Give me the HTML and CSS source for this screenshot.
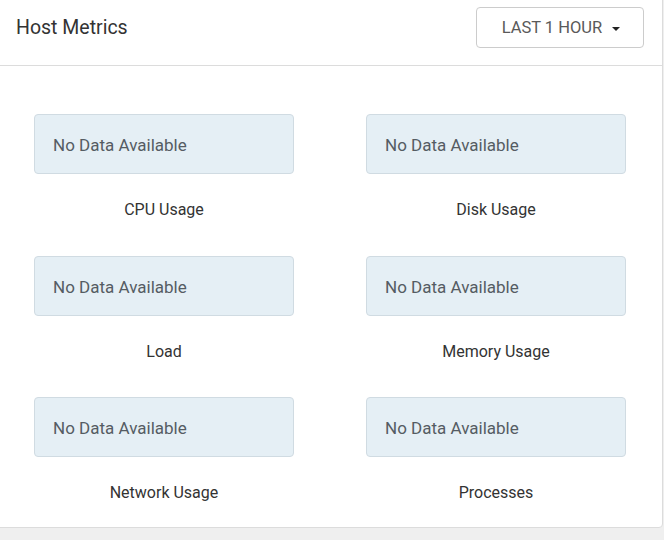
FILE: index.html
```html
<!DOCTYPE html>
<html lang="en">
<head>
    <meta charset="UTF-8">
    <title>Host Metrics</title>
    <link rel="stylesheet" href="styles.css">
</head>
<body>
    <div class="panel">
        <div class="panel-heading">
            <h3 class="panel-title">Host Metrics</h3>
            <button class="range-btn">Last 1 Hour <span class="caret"></span></button>
        </div>

        <div class="panel-body">
            <div class="metric">
                <div class="no-data">No Data Available</div>
                <div class="metric-label">CPU Usage</div>
            </div>
            <div class="metric">
                <div class="no-data">No Data Available</div>
                <div class="metric-label">Disk Usage</div>
            </div>
            <div class="metric">
                <div class="no-data">No Data Available</div>
                <div class="metric-label">Load</div>
            </div>
            <div class="metric">
                <div class="no-data">No Data Available</div>
                <div class="metric-label">Memory Usage</div>
            </div>
            <div class="metric">
                <div class="no-data">No Data Available</div>
                <div class="metric-label">Network Usage</div>
            </div>
            <div class="metric">
                <div class="no-data">No Data Available</div>
                <div class="metric-label">Processes</div>
            </div>
        </div>
    </div>
</body>
</html>
```

FILE: styles.css
```css
body {
    margin: 0;
    background: #efefef;
    font-family: 'Roboto', 'Liberation Sans', sans-serif;
    color: #333;
}

.panel {
    width: 664px;
    box-sizing: border-box;
    margin: -1px 0 0 -1px;
    background: #fff;
    border: 1px solid #dcdcdc;
    border-radius: 0 0 4px 0;
}

.panel-heading {
    height: 66px;
    box-sizing: border-box;
    display: flex;
    justify-content: space-between;
    align-items: flex-start;
    padding: 7px 18px 0 16px;
    border-bottom: 1px solid #dcdcdc;
}

.panel-title {
    margin: 0;
    font-size: 19.5px;
    font-weight: normal;
    line-height: 41px;
    color: #333;
}

.range-btn {
    height: 41px;
    width: 168px;
    padding: 0 0 0 2px;
    font-family: inherit;
    font-size: 16.5px;
    text-transform: uppercase;
    color: #5a5a5a;
    background: #fff;
    border: 1px solid #ccc;
    border-radius: 4px;
}

.caret {
    display: inline-block;
    width: 0;
    height: 0;
    margin-left: 6px;
    vertical-align: middle;
    border-top: 4px solid #222;
    border-left: 4px solid transparent;
    border-right: 4px solid transparent;
}

.panel-body {
    display: grid;
    grid-template-columns: 260px 260px;
    column-gap: 72px;
    row-gap: 35.5px;
    padding: 48px 0 24px 34px;
}

.metric {
    display: flex;
    flex-direction: column;
    align-items: center;
}

.no-data {
    width: 260px;
    height: 60px;
    box-sizing: border-box;
    padding-left: 18px;
    line-height: 60px;
    font-size: 17px;
    color: #555c63;
    background: #e5eff5;
    border: 1px solid #d0dbe2;
    border-radius: 4px;
}

.metric-label {
    margin-top: 26px;
    line-height: 20px;
    font-size: 16px;
    color: #333;
}
```
